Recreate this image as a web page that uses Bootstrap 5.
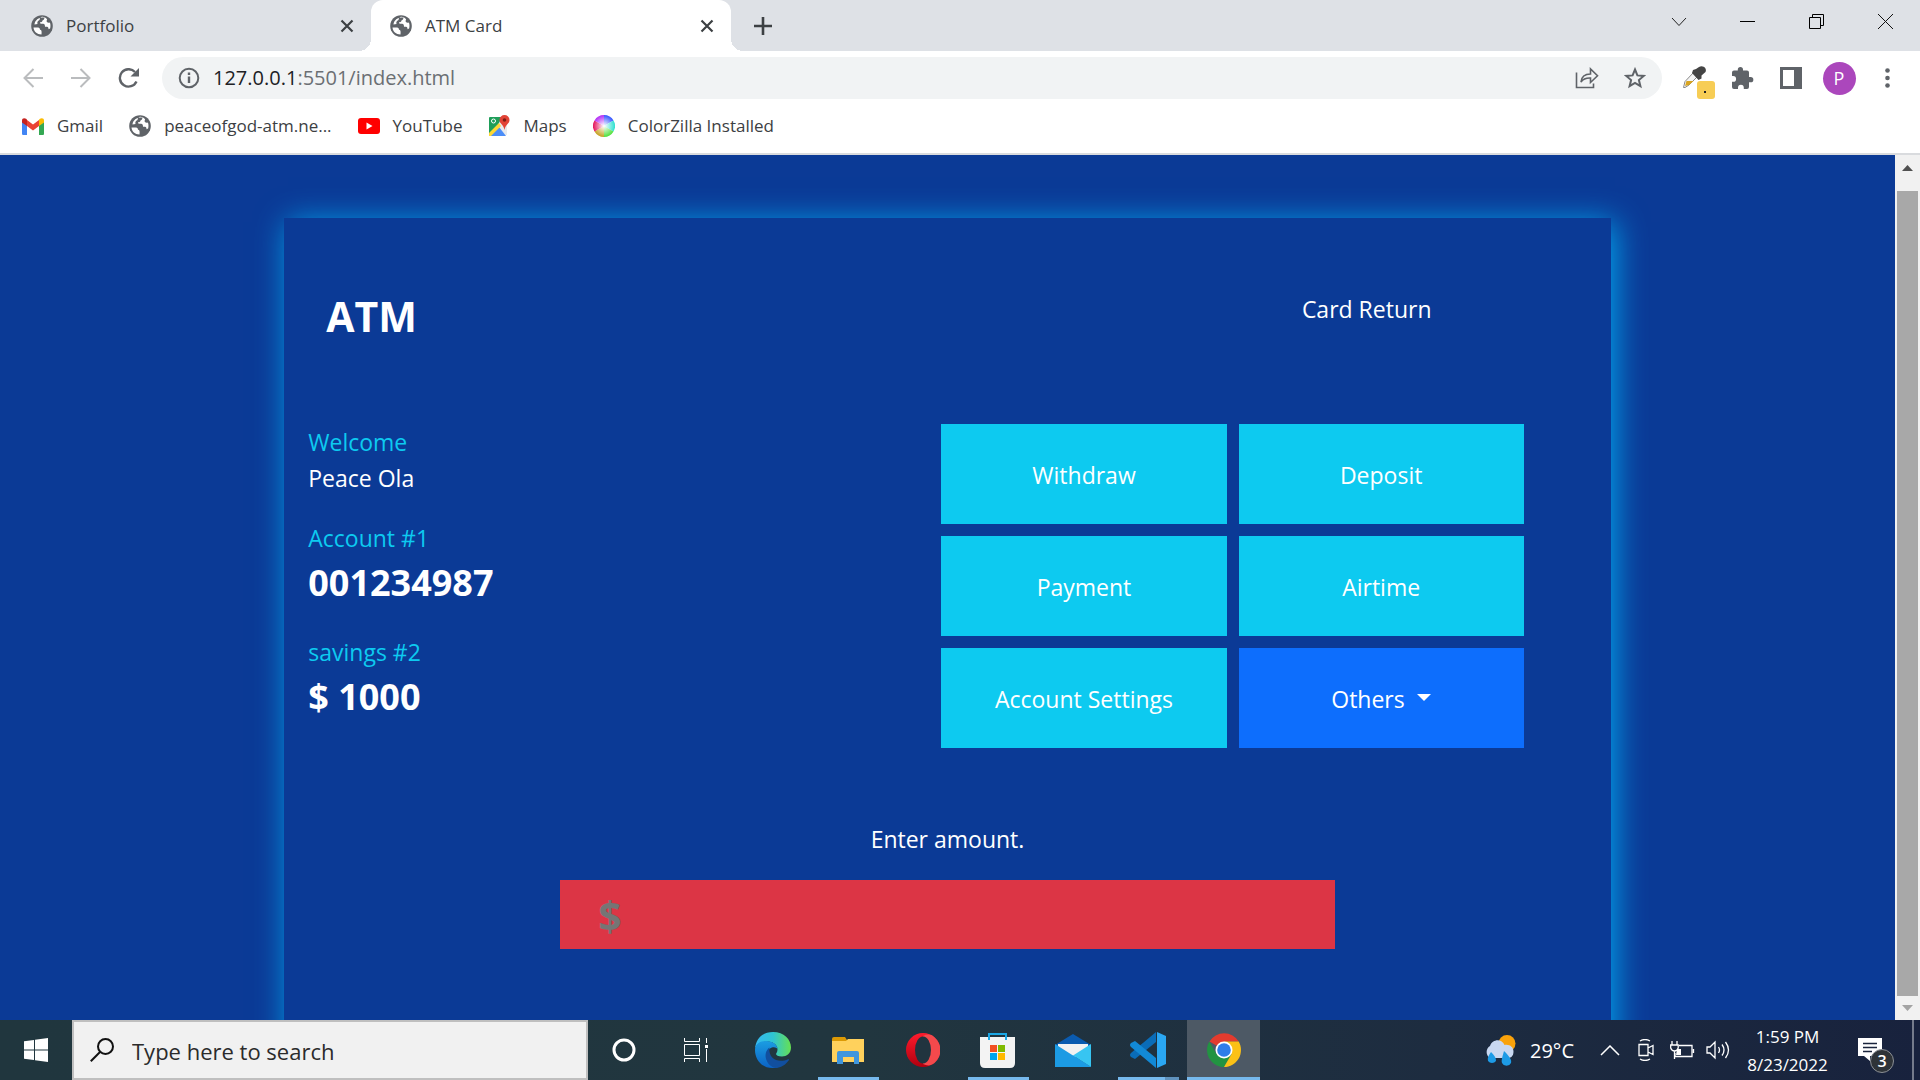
<!DOCTYPE html>
<html lang="en">
<head>
<meta charset="utf-8">
<meta name="viewport" content="width=device-width, initial-scale=1">
<title>ATM Card</title>
<link href="https://cdn.jsdelivr.net/npm/bootstrap@5.3.0/dist/css/bootstrap.min.css" rel="stylesheet">
<style>
  body { font-family: "Open Sans", "Noto Sans", sans-serif; height: 100vh; color: #3c4043; }
  button, input { font-family: inherit; }
  svg { display: block; flex: none; }
  .plain-btn { background: none; border: 0; padding: 0; color: inherit; display: flex; align-items: center; justify-content: center; flex: none; }

  /* browser chrome */
  .tab-strip { height: 51px; background: #dee1e6; font-size: 17px; }
  .tab-item { height: 51px; gap: 13px; padding-right: 17px; }
  .tab-first { width: 371px; padding-left: 31px; }
  .tab-active { width: 360px; padding-left: 19px; background: #fff; border-radius: 12px 12px 0 0; position: relative; }
  .tab-active::before, .tab-active::after { content: ""; position: absolute; bottom: 0; width: 12px; height: 12px; }
  .tab-active::before { left: -12px; background: radial-gradient(circle at 0 0, transparent 12px, #fff 12px); }
  .tab-active::after { right: -12px; background: radial-gradient(circle at 100% 0, transparent 12px, #fff 12px); }
  .tab-new { width: 64px; height: 51px; }
  .win-btn { width: 69px; height: 43px; color: #000; }
  .tool-row { height: 54px; padding: 0 9px; }
  .tool-btn { width: 48px; height: 42px; color: #5f6368; position: relative; }
  .omnibox { height: 42px; border-radius: 21px; background: #f1f3f4; margin: 0 9px; padding: 0 3px 0 16px; gap: 13px; font-size: 20px; line-height: 42px; color: #6b6f73; }
  .omnibox b { font-weight: 400; color: #202124; }
  .bookmark-row { height: 50px; padding: 0 22px 6px; gap: 26px; font-size: 17px; border-bottom: 2px solid #d9dbde; }
  .bookmark-row a { color: #3c4043; gap: 13px; }
  .avatar { width: 33px; height: 33px; background: #ab47bc; color: #fff; font-size: 18px; }

  /* page */
  .page-view { background: #0b3a96; color: #fff; font-size: 23px; }
  .atm-panel { width: 70%; margin: 63px auto 0; height: 1000px; background: #0b3a96; box-shadow: 4px 4px 30px #00a8f0; }
  .atm-head { padding: 74px 0 84px 42px; }
  .atm-head h1 { font-size: 41px; line-height: 48px; font-weight: 700; margin: 0; }
  .card-return { width: 38%; line-height: 34px; }
  .atm-info { padding-left: 24px; line-height: 36px; }
  .atm-info p { margin-bottom: 24px; }
  .atm-info strong { display: block; font-size: 36px; line-height: 54px; }
  .sky { color: #0dcaf0; }
  .atm-actions { width: 43.9%; margin-right: 87px; display: grid; grid-template-columns: 1fr 1fr; gap: 12px; }
  .atm-actions .btn { height: 100px; border: 0; border-radius: 0; padding: 8px 12px 6px; font-size: 23px; color: #fff; }
  .atm-actions .dropdown-toggle::after { font-size: 25px; }
  .atm-amount { padding-top: 73px; line-height: 36px; }
  .atm-amount input { width: 58.4%; height: 69px; margin-top: 23px; padding: 0 38px; border: 0; background: #dc3545; color: #fff; font-size: 41px; font-weight: 700; }
  .atm-amount input::placeholder { color: #757575; opacity: 1; }
  .scroll-track { width: 25px; background: #f1f1f1; padding: 0 2px; }
  .scroll-arrow { height: 36px; width: 21px; }
  .scroll-arrow.down { height: 24px; }
  .scroll-thumb { width: 21px; background: #a8a8a8; }

  /* taskbar */
  .taskbar { height: 60px; background: linear-gradient(90deg, #20363e 0%, #21363f 45%, #1d2c40 75%, #18223d 100%); color: #fff; font-size: 18px; }
  .start-btn { width: 72px; height: 60px; }
  .search-box { width: 516px; border: 2px solid #bfbfbf; background: #f1f1f1; padding-left: 16px; gap: 18px; }
  .search-box input { border: 0; background: none; outline: 0; font-size: 22px; padding: 2px 0 0; color: #2b2b2b; }
  .search-box input::placeholder { color: #2b2b2b; opacity: 1; }
  .task-btn { width: 75px; height: 60px; position: relative; }
  .task-first { width: 72px; }
  .task-open::after { content: ""; position: absolute; left: 8px; right: 6px; bottom: 0; height: 3px; background: #76b9ed; }
  .task-multi::after { background: linear-gradient(90deg, #76b9ed 47px, #5f92bd 47px); }
  .task-current { background: #4d5965; width: 73px; margin-left: 2px; }
  .task-current::after { left: 0; right: 0; }
  .weather { gap: 13px; padding: 2px 18px 0 0; font-size: 20px; }
  .tray-btn { width: 36px; height: 60px; }
  .clock-btn { width: 101px; font-size: 17px; line-height: 28px; padding: 1px 0 0 2px; }
  .notice-btn { width: 75px; height: 60px; }
  .desk-edge { width: 8px; border-left: 2px solid #747b8b; }
</style>
<script src="https://cdn.jsdelivr.net/npm/bootstrap@5.3.0/dist/js/bootstrap.bundle.min.js"></script>
</head>
<body class="d-flex flex-column overflow-hidden">
<svg width="0" height="0" class="position-absolute" aria-hidden="true">
  <symbol id="globe" viewBox="0 0 22 22"><circle cx="11" cy="11" r="10.800" fill="#5f6368"/><path d="M2.500 12.500h4.500c1.500 0 2 1 2 2.300 1.700.2 1.800 1.500 1.500 4.700C6 19.500 2.800 16.500 2.500 12.500zM9.500 3c1.500-.6 2.500-.6 4-.4-.2 1.700-.7 2.400-2 2.800-.3 1.700-1.200 1.600-2.500 1.800-.2 1.300.3 1.500 3 1.500 1.800 0 2 1.500 2 3h2c1.200 0 1.500 1.300 1.500 2.500l1.600-.6c.5-1.300.6-4.600-.2-6.100-.8.500-2.200.4-3-.4-.4-.9-.2-2.100.2-2.900C13 1.200 10.500 1.300 9.500 3z" fill="#fff"/><path d="M3.500 9.500C3.800 6 6.500 3.500 9 3l-.5 2C6.500 5.500 6 7.500 6.500 9z" fill="#fff"/></symbol>
</svg>

<header class="bg-white flex-shrink-0">
  <div class="tab-strip d-flex">
    <div class="tab-item tab-first d-flex align-items-center">
      <svg width="22" height="22"><use href="#globe"/></svg><span>Portfolio</span>
      <button class="plain-btn ms-auto" aria-label="Close tab"><svg width="14" height="14" stroke="#3c4043" stroke-width="2.200"><path d="M1.500 1.500l11 11M12.500 1.500l-11 11"/></svg></button>
    </div>
    <div class="tab-item tab-active d-flex align-items-center">
      <svg width="22" height="22"><use href="#globe"/></svg><span>ATM Card</span>
      <button class="plain-btn ms-auto" aria-label="Close tab"><svg width="14" height="14" stroke="#3c4043" stroke-width="2.200"><path d="M1.500 1.500l11 11M12.500 1.500l-11 11"/></svg></button>
    </div>
    <button class="plain-btn tab-new" aria-label="New tab"><svg width="18" height="18" stroke="#3c4043" stroke-width="2.600"><path d="M9 0v18M0 9h18"/></svg></button>
    <div class="d-flex ms-auto">
      <button class="plain-btn win-btn" aria-label="Search tabs"><svg width="16" height="10" fill="none" stroke="#222"><path d="M1 1l7 7.500L15 1"/></svg></button>
      <button class="plain-btn win-btn" aria-label="Minimize"><svg width="15" height="1"><path d="M0 0h15v1H0z"/></svg></button>
      <button class="plain-btn win-btn" aria-label="Restore"><svg width="15" height="15" fill="none" stroke="#000"><path d="M.5 3.500h11v11H.5zM3.500 3.500v-3h11v11h-3"/></svg></button>
      <button class="plain-btn win-btn" aria-label="Close"><svg width="15" height="15" stroke="#111"><path d="M0 0l15 15M15 0L0 15"/></svg></button>
    </div>
  </div>
  <div class="tool-row d-flex align-items-center">
    <button class="plain-btn tool-btn" aria-label="Back"><svg width="20" height="20" fill="none" stroke="#babcbe" stroke-width="2"><path d="M20 10H1.500M10.500 1L1.500 10l9 9"/></svg></button>
    <button class="plain-btn tool-btn" aria-label="Forward"><svg width="20" height="20" fill="none" stroke="#babcbe" stroke-width="2"><path d="M0 10h18.500M9.500 1l9 9-9 9"/></svg></button>
    <button class="plain-btn tool-btn" aria-label="Reload"><svg width="22" height="20" fill="none" stroke="#5f6368" stroke-width="2.400"><path d="M18.500 13.500A8.700 8.700 0 1 1 17 4"/><path d="M21 0v8.500h-8.500z" fill="#5f6368" stroke="none"/></svg></button>
    <div class="omnibox d-flex align-items-center flex-grow-1">
      <svg width="22" height="22" fill="none" stroke="#5f6368" stroke-width="2"><circle cx="11" cy="11" r="9.300"/><path d="M11 9.500V16M11 5.500V8" stroke-width="2.400"/></svg>
      <span class="flex-grow-1"><b>127.0.0.1</b>:5501/index.html</span>
      <div class="d-flex">
        <button class="plain-btn tool-btn" aria-label="Share"><svg width="24" height="22" fill="none" stroke="#5f6368" stroke-width="1.600"><path d="M1.500 5.500v15h17v-4M6 15c.5-5.500 4-8 9.500-8V2l7 6.800-7 6.700V11C11 10.800 8 12 6 15z"/></svg></button>
        <button class="plain-btn tool-btn" aria-label="Bookmark this page"><svg width="22" height="22" fill="none" stroke="#5f6368" stroke-width="2"><path d="M11 2.500l2.400 5.900 6.400.5-4.900 4.100 1.500 6.200L11 15.900l-5.400 3.300 1.500-6.200L2.200 8.900l6.400-.5z"/></svg></button>
      </div>
    </div>
    <button class="plain-btn tool-btn" aria-label="ColorZilla"><svg width="40" height="42"><path d="M8.500 30.500l1.500-6 9-9.500 4 4-9 9-4 2.500z" fill="#f4f4f4" stroke="#8a8a8a"/><path d="M10 29l1.500-5h7L14 28z" fill="#d9a520"/><path d="M18 13l3-1 3-2c3.500-2.500 8.500 1 6.500 5l-4 3.500v3L23.500 23 17 16z" fill="#444"/><rect x="22" y="24" width="18" height="18" rx="3" fill="#f7cd55"/><path d="M29 34h2v2h-2z" fill="#222"/></svg></button>
    <button class="plain-btn tool-btn" aria-label="Extensions"><svg width="22" height="22" fill="#5f6368"><path d="M18.700 10H17V5.500a2 2 0 0 0-2-2h-4V2.600a2.600 2.600 0 0 0-5.200 0v.9H2a2 2 0 0 0-2 2V9h1.200a2.900 2.900 0 0 1 0 5.800H0V20a2 2 0 0 0 2 2h4v-1.300a2.900 2.900 0 0 1 5.800 0V22H15a2 2 0 0 0 2-2v-4.700h1.700a2.650 2.650 0 0 0 0-5.300z"/></svg></button>
    <button class="plain-btn tool-btn" aria-label="Side panel"><svg width="22" height="22"><path d="M0 0h22v22H0z" fill="#5f6368"/><path d="M3 3h11v16H3z" fill="#fff"/></svg></button>
    <button class="plain-btn tool-btn" aria-label="Profile"><span class="avatar rounded-circle d-flex align-items-center justify-content-center">P</span></button>
    <button class="plain-btn tool-btn" aria-label="Menu"><svg width="5" height="20" fill="#5f6368"><circle cx="2.500" cy="2.500" r="2.300"/><circle cx="2.500" cy="10" r="2.300"/><circle cx="2.500" cy="17.500" r="2.300"/></svg></button>
  </div>
  <nav class="bookmark-row d-flex align-items-center" aria-label="Bookmarks">
    <a href="#" class="d-flex align-items-center text-decoration-none"><svg width="22" height="17"><path d="M0 3v12.500C0 16.500.5 17 1.500 17H5V7z" fill="#4285f4"/><path d="M22 3v12.500c0 1-.5 1.500-1.500 1.500H17V7z" fill="#34a853"/><path d="M17 2v6l5-3.500V2.500C22 0 19.500-.5 17.500 1z" fill="#fbbc04"/><path d="M5 8V2l6 4.500L17 2v6l-6 4.500z" fill="#ea4335"/><path d="M0 2.500V4.500L5 8V2L4.500 1C2.500-.5 0 0 0 2.500z" fill="#c5221f"/></svg>Gmail</a>
    <a href="#" class="d-flex align-items-center text-decoration-none"><svg width="22" height="22"><use href="#globe"/></svg>peaceofgod-atm.ne...</a>
    <a href="#" class="d-flex align-items-center text-decoration-none"><svg width="22" height="16"><rect width="22" height="16" rx="3" fill="#f00"/><path d="M8.500 4.500l6 3.500-6 3.500z" fill="#fff"/></svg>YouTube</a>
    <a href="#" class="d-flex align-items-center text-decoration-none"><svg width="22" height="22"><path d="M2 2h17v18H2z" fill="#e8eaed"/><path d="M1 3q0-1 1-1h12L9 12l-8 8z" fill="#1e9e59"/><path d="M2 21L11 12l7 9z" fill="#4b8df8"/><path d="M1 18l10-10 2 3L3 21H1z" fill="#fdd835"/><circle cx="5.500" cy="6" r="2" fill="none" stroke="#fff"/><path d="M16.500 0a5 5 0 0 0-5 5c0 4 4 4 5 10 1-6 5-6 5-10a5 5 0 0 0-5-5z" fill="#e24336"/><circle cx="16.500" cy="5" r="1.800" fill="#7b1e16"/></svg>Maps</a>
    <a href="#" class="d-flex align-items-center text-decoration-none"><svg width="22" height="22"><defs><radialGradient id="wheelGlow"><stop offset="0" stop-color="#fff"/><stop offset=".3" stop-color="#fff" stop-opacity=".7"/><stop offset="1" stop-color="#fff" stop-opacity="0"/></radialGradient></defs><g><path d="M11 11V0A11 11 0 0 1 20.500 5.500z" fill="#35f"/><path d="M11 11l9.500-5.500a11 11 0 0 1 0 11z" fill="#2fe0d0"/><path d="M11 11l9.500 5.500A11 11 0 0 1 11 22z" fill="#4fe03a"/><path d="M11 11v11a11 11 0 0 1-9.500-5.500z" fill="#c5a020"/><path d="M11 11l-9.500 5.500a11 11 0 0 1 0-11z" fill="#e3145c"/><path d="M11 11L1.500 5.500A11 11 0 0 1 11 0z" fill="#b32cf5"/></g><circle cx="11" cy="11" r="11" fill="url(#wheelGlow)"/></svg>ColorZilla Installed</a>
  </nav>
</header>

<div class="page-view d-flex flex-grow-1 overflow-hidden">
  <main class="flex-grow-1">
    <section class="atm-panel">
      <div class="atm-head d-flex justify-content-between align-items-start">
        <h1>ATM</h1>
        <div class="card-return text-center">Card Return</div>
      </div>
      <div class="d-flex justify-content-between align-items-start">
        <div class="atm-info">
          <p><span class="sky">Welcome</span><br>Peace Ola</p>
          <p><span class="sky">Account #1</span><strong>001234987</strong></p>
          <p class="mb-0"><span class="sky">savings #2</span><strong>$ 1000</strong></p>
        </div>
        <div class="atm-actions">
          <button class="btn btn-info">Withdraw</button>
          <button class="btn btn-info">Deposit</button>
          <button class="btn btn-info">Payment</button>
          <button class="btn btn-info">Airtime</button>
          <button class="btn btn-info">Account Settings</button>
          <button class="btn btn-primary dropdown-toggle">Others </button>
        </div>
      </div>
      <div class="atm-amount d-flex flex-column align-items-center">
        <label for="amount">Enter amount.</label>
        <input id="amount" type="text" placeholder="$">
      </div>
    </section>
  </main>
  <div class="scroll-track d-flex flex-column" aria-hidden="true">
    <svg class="scroll-arrow" viewBox="0 0 21 36"><path d="M5 16h11l-5.500-6z" fill="#505050"/></svg>
    <div class="scroll-thumb flex-grow-1"></div>
    <svg class="scroll-arrow down" viewBox="0 0 21 24"><path d="M5 9h11l-5.500 6z" fill="#a3a3a3"/></svg>
  </div>
</div>

<footer class="taskbar d-flex flex-shrink-0">
  <button class="plain-btn start-btn" aria-label="Start"><svg width="24" height="24" fill="#fff"><path d="M0 3.300l10-1.400v9.600H0zM11 1.700L24 0v11.500H11zM0 12.500h10v9.600L0 20.700zM11 12.500h13V24l-13-1.700z"/></svg></button>
  <div class="search-box d-flex align-items-center">
    <svg width="24" height="24" fill="none" stroke="#111" stroke-width="2"><circle cx="15.500" cy="8.500" r="7.500"/><path d="M10 14L.8 23.200"/></svg>
    <input type="text" class="flex-grow-1" placeholder="Type here to search" aria-label="Type here to search">
  </div>
  <button class="plain-btn task-btn task-first" aria-label="Cortana"><svg width="24" height="24" fill="none" stroke="#fff" stroke-width="3"><circle cx="12" cy="12" r="10"/></svg></button>
  <button class="plain-btn task-btn" aria-label="Task view"><svg width="28" height="24" fill="none" stroke="#fff"><path d="M.5 0v3.500h15V0M.5 6.500h15v11H.5zM.5 24v-3.500h15V24M22.500 0v5M22.500 11v13"/><path d="M21 7h3v3h-3z" fill="#fff" stroke="none"/></svg></button>
  <button class="plain-btn task-btn" aria-label="Edge"><svg width="36" height="36"><defs><linearGradient id="edgeTop"><stop offset="0" stop-color="#35b8f1"/><stop offset=".5" stop-color="#2fc4d2"/><stop offset="1" stop-color="#66e052"/></linearGradient><linearGradient id="edgeLow" x2="0" y2="1"><stop offset="0" stop-color="#1b9de2"/><stop offset="1" stop-color="#0b62c4"/></linearGradient></defs><path d="M0 17C1 5 9 0 18 0c11 0 18 7.500 18 15.500 0 6-4.500 9-9 9-4 0-6-1.500-6-2.500 0-.8 1.500-1.500 1.500-4.500C22.500 12 17 9.500 12 9.500 5.500 9.500 1 13 0 17z" fill="url(#edgeTop)"/><path d="M0 18c0-5 4-9 11-9 7 0 11.500 4 11.500 8.500 0-3-8.500-4-10 3-1.500 8 5 14.500 11 14.500-2 1-4 1-6 1C6 36 0 27 0 18z" fill="url(#edgeLow)"/><path d="M14.500 15.500C7 21 11 34 20.500 36c6-.4 10.500-3.500 13.500-8 .3-.8-.3-1-1-.7-9 4-20 .2-18.500-11.800z" fill="#114f9f"/></svg></button>
  <button class="plain-btn task-btn task-open" aria-label="File Explorer"><svg width="32" height="27"><path d="M0 2q0-2 2-2h11l2 3v4H0z" fill="#dc9a05"/><path d="M0 4h14l2-2h16v23H0z" fill="#ffd15c"/><path d="M5 27V16q0-2 2-2h18q2 0 2 2v11h-5v-7H11v7z" fill="#3f96dd"/></svg></button>
  <button class="plain-btn task-btn" aria-label="Opera"><svg width="34" height="34"><defs><linearGradient id="operaRing" x2="0" y2="1"><stop offset="0" stop-color="#ff1b2d"/><stop offset="1" stop-color="#b0000f"/></linearGradient></defs><circle cx="17" cy="17" r="17" fill="url(#operaRing)"/><path d="M17 3c4-2 8-2 11.500 1.200A17 17 0 0 1 28.500 30C25 33 21 33 17 31z" fill="#f4494c"/><ellipse cx="17" cy="17" rx="8" ry="13.500" fill="#21343f"/></svg></button>
  <button class="plain-btn task-btn task-open" aria-label="Microsoft Store"><svg width="35" height="35"><path d="M0 4h35v26q0 5-5 5H5q-5 0-5-5z" fill="#f3f3f3"/><path d="M9 7V1h17v6" fill="none" stroke="#1ba7e5" stroke-width="2"/><path d="M10 12h7v7h-7z" fill="#f25022"/><path d="M18 12h7v7h-7z" fill="#7fba00"/><path d="M10 20h7v7h-7z" fill="#00a4ef"/><path d="M18 20h7v7h-7z" fill="#ffb900"/></svg></button>
  <button class="plain-btn task-btn" aria-label="Mail"><svg width="36" height="33"><path d="M0 11L18 0l18 11v5H0z" fill="#0a5bb0"/><path d="M3 10h30v13H3z" fill="#f2f2f2"/><path d="M0 10l36 23H0z" fill="#1c9be4"/><path d="M36 10v23L18 21.500z" fill="#37c5f2"/><path d="M0 33h36L18 21.500z" fill="#1c9be4"/></svg></button>
  <button class="plain-btn task-btn task-open task-multi" aria-label="Visual Studio Code"><svg width="36" height="36"><path d="M26 0v10L5 27l-4-2q-2-2 0-4z" fill="#0a6cb8"/><path d="M26 36V26L5 9l-4 2q-2 2 0 4z" fill="#1289d6"/><path d="M27 0l9 4v28l-9 4z" fill="#2aa7f3"/></svg></button>
  <button class="plain-btn task-btn task-open task-current" aria-label="Chrome"><svg width="34" height="34"><path d="M17 17L2.500 8.500A17 17 0 0 1 31.700 8.500H17z" fill="#e33b2e"/><path d="M2.300 8.500A17 17 0 0 0 17 34l7.400-12.800L17 17l-7.400 4.200z" fill="#229342"/><path d="M17 8.500h14.700A17 17 0 0 1 17 34l7.400-12.800z" fill="#fbc116"/><circle cx="17" cy="17" r="8.500" fill="#fff"/><circle cx="17" cy="17" r="6.800" fill="#2f7de9"/></svg></button>

  <div class="d-flex align-items-center ms-auto">
    <div class="weather d-flex align-items-center"><svg width="34" height="32"><circle cx="24" cy="8.500" r="8.500" fill="#f9a20b"/><path d="M7 23a7 7 0 0 1 0-12C9 4 19 3 21.500 10c5-1 9 2 9 6.500S28 23 25 23z" fill="#c9d8f1"/><path d="M8 17c5 5 5 7 5 9a5 5 0 0 1-8 0c-1-3 1-6 3-9zM21 16c6 6 8 9 7 12a5 5 0 0 1-9 0c-1-3 1-8 2-12z" fill="#1d9be6"/></svg><span>29°C</span></div>
    <button class="plain-btn tray-btn" aria-label="Show hidden icons"><svg width="20" height="11" fill="none" stroke="#fff" stroke-width="1.500"><path d="M1 10l9-9 9 9"/></svg></button>
    <button class="plain-btn tray-btn" aria-label="Meet now"><svg width="18" height="22" fill="none" stroke="#fff" stroke-width="1.300"><path d="M2 5.500h9v11H2zM11 9l5-2.500v9L11 13M3 2q5-3 10 0M3 20q5 3 10 0"/></svg></button>
    <button class="plain-btn tray-btn" aria-label="Battery"><svg width="25" height="18" fill="none" stroke="#fff" stroke-width="1.300"><path d="M9 4.500h13v11H5V12M23.500 8v4M2 0v4M7 0v4M.7 4h7.500v3q-1 3-3.700 3T.7 7zM4.500 10v8"/><path d="M7 8h4v6H6z" fill="#fff" stroke="none"/></svg></button>
    <button class="plain-btn tray-btn" aria-label="Volume"><svg width="24" height="20" fill="none" stroke="#fff" stroke-width="1.300"><path d="M1 7h3l5-5v16l-5-5H1zM12.500 7q2 3 0 6M16 4.500q4 5.500 0 11M19.500 2q6 8 0 16"/></svg></button>
    <button class="plain-btn clock-btn flex-column"><span>1:59 PM</span><span>8/23/2022</span></button>
    <button class="plain-btn notice-btn" aria-label="3 notifications"><svg width="40" height="46"><path d="M3 11h24v18H15v5l-6-5H3z" fill="#fff"/><path d="M8 16.500h14M8 20.500h14M8 24.500h9" stroke="#1b253d" stroke-width="1.400"/><circle cx="27" cy="34" r="11.500" fill="#2e3338" stroke="#8c9096"/><text x="27" y="40" text-anchor="middle" font-size="16" font-weight="600" fill="#fff">3</text></svg></button>
    <div class="desk-edge align-self-stretch"></div>
  </div>
</footer>
</body>
</html>
